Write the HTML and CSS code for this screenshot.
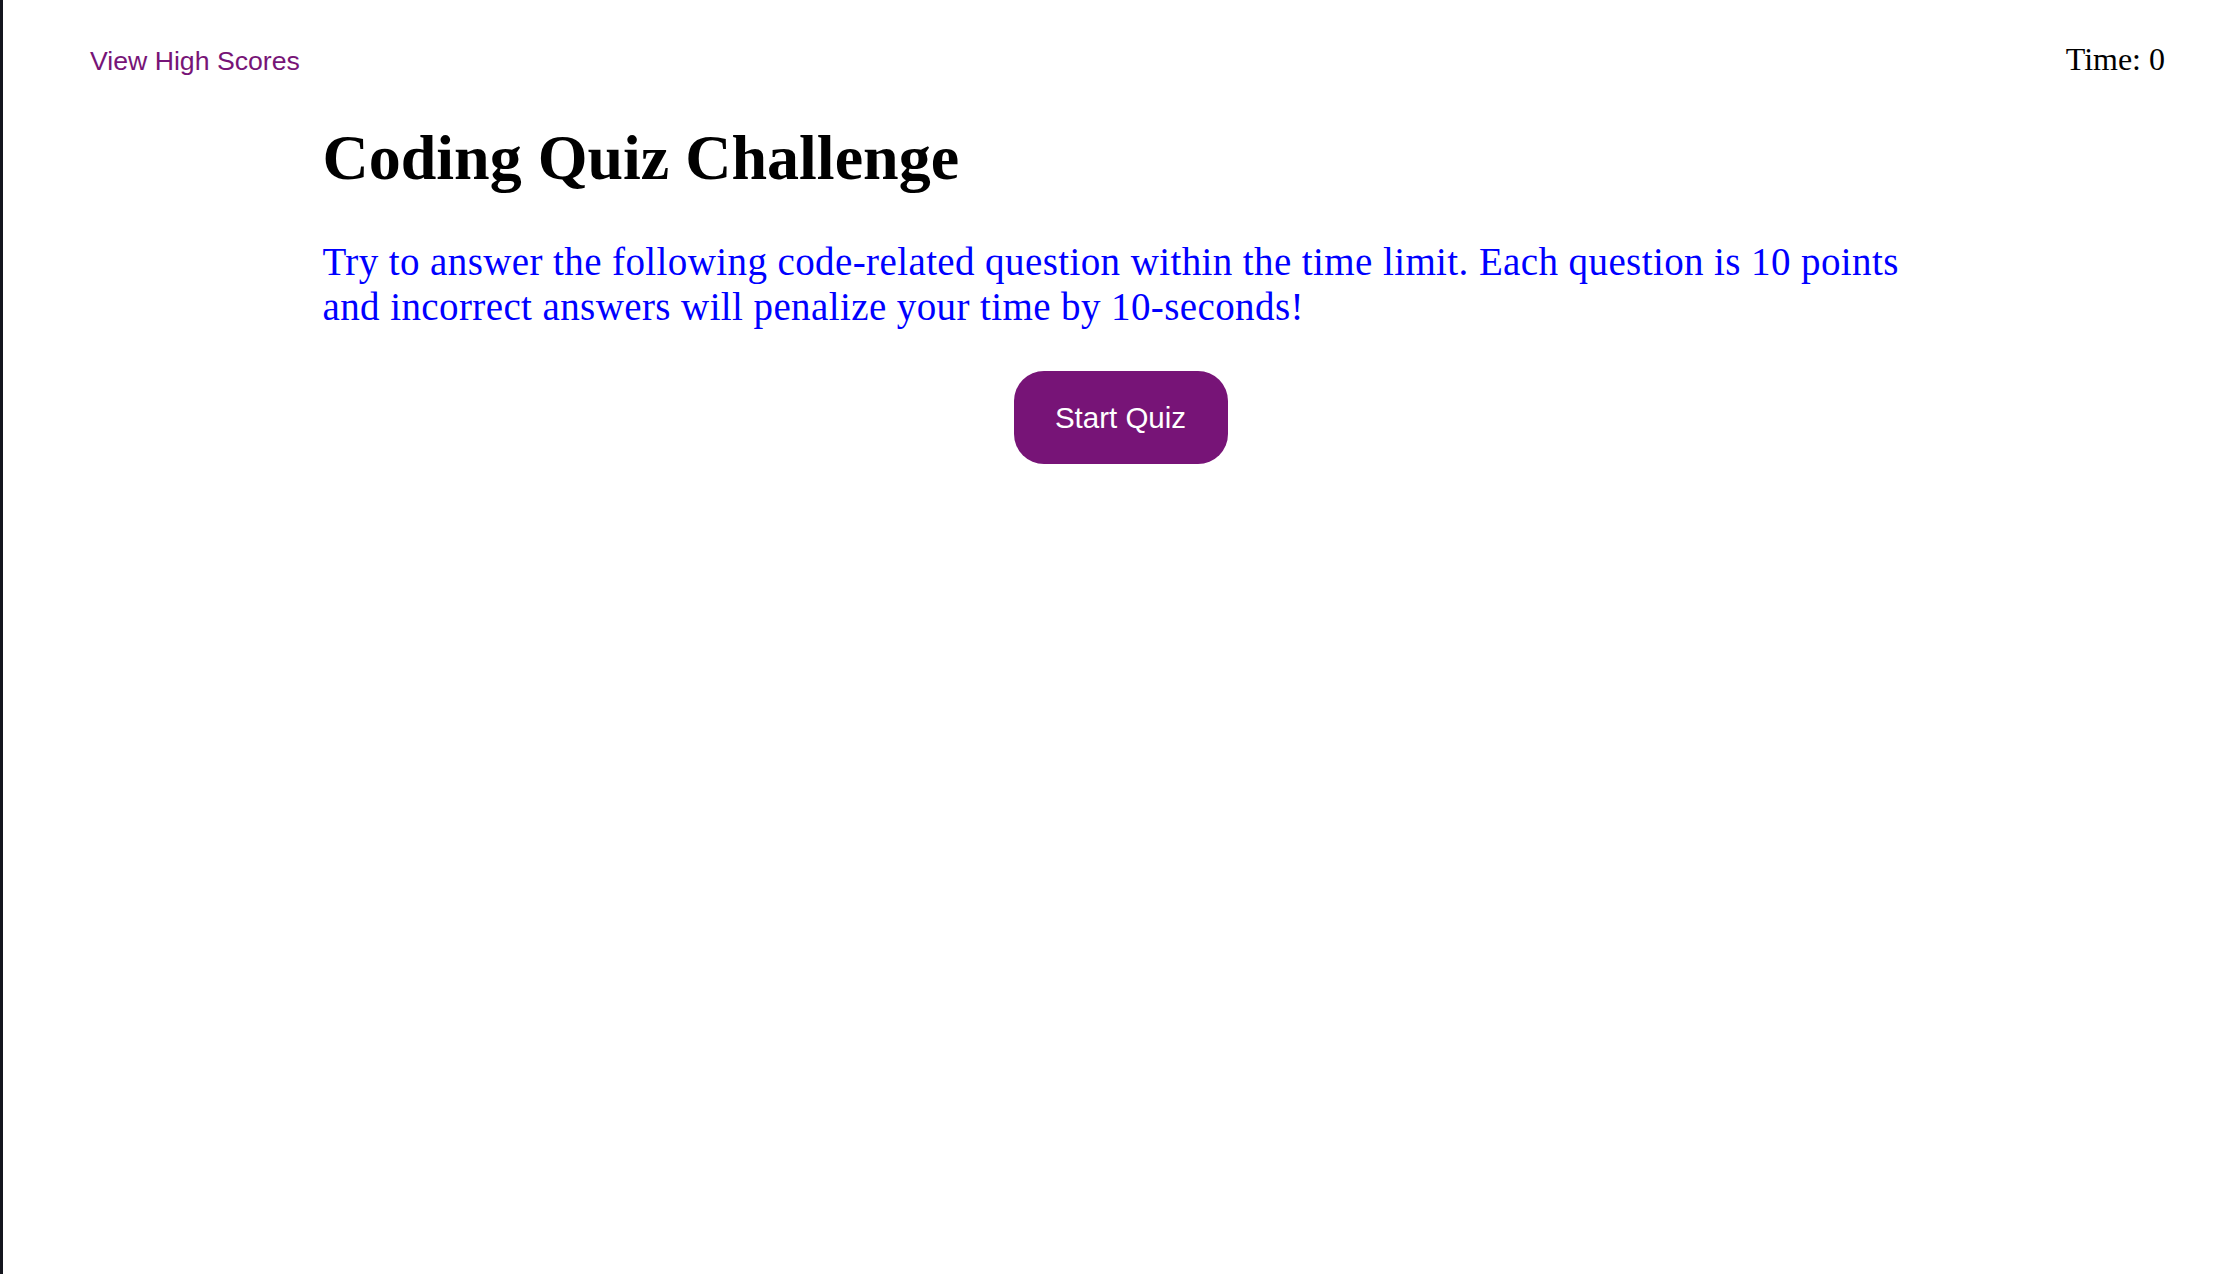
FILE: index.html
```html
<!DOCTYPE html>
<html lang="en">
<head>
<meta charset="utf-8">
<title>Coding Quiz Challenge</title>
<link rel="stylesheet" href="styles.css">
</head>
<body>
<div class="page">
  <header class="topbar">
    <a class="scores-link" href="#">View High Scores</a>
    <div class="timer">Time: <span>0</span></div>
  </header>
  <main class="quiz">
    <h1 class="quiz-title">Coding Quiz Challenge</h1>
    <p class="quiz-intro">Try to answer the following code-related question within the time limit. Each question is 10 points and incorrect answers will penalize your time by 10-seconds!</p>
    <div class="actions">
      <button class="start-btn" type="button">Start Quiz</button>
    </div>
  </main>
</div>
</body>
</html>
```
FILE: styles.css
```css
html, body {
  margin: 0;
  padding: 0;
  height: 100%;
  background: #ffffff;
}

body {
  font-family: "Liberation Serif", "Times New Roman", serif;
  color: #000000;
}

.page {
  min-height: 100%;
  border-left: 3px solid #14161e;
  box-sizing: border-box;
}

.topbar {
  display: flex;
  justify-content: space-between;
  align-items: baseline;
  padding: 41px 73px 0 87px;
  line-height: 37px;
}

.scores-link {
  font-family: "Liberation Sans", Arial, sans-serif;
  font-size: 26.67px;
  color: #771477;
  text-decoration: none;
}

.timer {
  font-size: 32px;
}

.quiz {
  width: 1596px;
  margin: 0 auto;
}

.quiz-title {
  margin: 41px 0 0;
  font-size: 64px;
  line-height: 74px;
  font-weight: bold;
}

.quiz-intro {
  margin: 44px 0 0;
  font-size: 39px;
  letter-spacing: 0.4px;
  line-height: 45px;
  color: #0000ff;
}

.actions {
  display: flex;
  justify-content: center;
  margin-top: 42px;
}

.start-btn {
  width: 214px;
  height: 93px;
  border: none;
  border-radius: 30px;
  background: #771477;
  color: #ffffff;
  font-family: "Liberation Sans", Arial, sans-serif;
  font-size: 29.5px;
  cursor: pointer;
}
```
